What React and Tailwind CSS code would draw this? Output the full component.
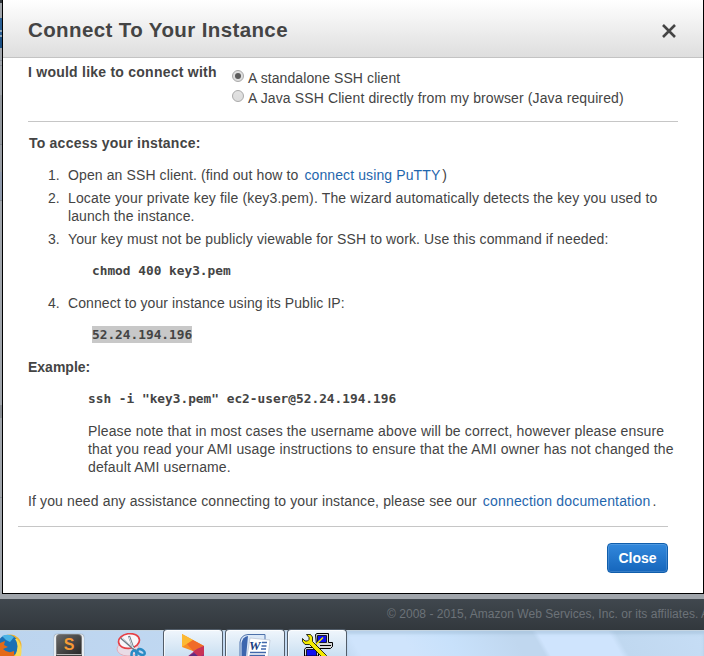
import React from "react";

const link = "text-[#1f66ad]";

function Radio({ checked }) {
  return (
    <span className="flex h-3 w-3 shrink-0 items-center justify-center rounded-full border border-[#a9a9a9] bg-linear-to-b from-[#e2e2e2] to-[#dcdcdc]">
      {checked && <span className="h-1.5 w-1.5 rounded-full bg-[#5c5c5c]" />}
    </span>
  );
}

function Line({ children, className = "" }) {
  return <div className={"h-[18px] whitespace-nowrap leading-[18px] " + className}>{children}</div>;
}

function Step({ n, children, className = "" }) {
  return (
    <li className={"flex " + className}>
      <span className="w-5 shrink-0 leading-[18px]">{n}.</span>
      <div>{children}</div>
    </li>
  );
}

function Firefox() {
  return (
    <svg className="h-[22px] w-[22px]" viewBox="0 0 22 22">
      <circle cx="10" cy="12" r="11.5" fill="#f2b32e" />
      <circle cx="8" cy="12" r="11" fill="#1c70b5" />
      <path d="M2 2 Q9 -1 14 3 L10 8 L6 6Z" fill="#4bb4e6" />
      <path d="M0 9 L5 7 L4 11 L8 13 L3 15 Q8 20 14 17 L14 22 L0 22Z" fill="#e46a18" />
      <path d="M15 5 Q20 11 15 22 L21 22 Q23 11 17 5Z" fill="#f8d958" />
    </svg>
  );
}

function Sublime() {
  return (
    <div className="h-[23px] w-[30px] rounded-t bg-[#e8edf1] px-0.5 shadow-[0_0_1px_#555]">
      <div className="flex h-[21px] items-center justify-center rounded-t-sm border border-[#777] border-b-[#bbb] bg-linear-to-br from-[#696969] to-[#292929] font-['Liberation_Sans'] text-[16px] font-bold leading-none text-[#f79a35]">
        S
      </div>
      <div className="h-[2px] bg-[#444]" />
    </div>
  );
}

function Scissors() {
  return (
    <svg className="h-[23px] w-[31px]" viewBox="0 0 31 23">
      <ellipse cx="12" cy="16" rx="11" ry="7" fill="#e9dbe6" stroke="#e4adb8" />
      <ellipse cx="13" cy="8" rx="10.500" ry="7.300" transform="rotate(-8 13 8)" fill="#f8f6fa" stroke="#e64046" strokeWidth="1.700" />
      <path d="M5 5 L20 18 M13 3 L18 17" stroke="#727d88" strokeWidth="2.200" />
      <path d="M6 5 L19 16 M13 4 L17 15" stroke="#dbe4e9" />
      <ellipse cx="18" cy="21.500" rx="2.500" ry="4" fill="none" stroke="#298bc5" strokeWidth="2.500" />
      <ellipse cx="25" cy="19" rx="4" ry="2.500" transform="rotate(30 25 19)" fill="none" stroke="#298bc5" strokeWidth="2.500" />
    </svg>
  );
}

function Ribbon() {
  return (
    <svg className="h-[23px] w-[22px]" viewBox="0 0 22 23">
      <path d="M0 0 L22 12 L11 17 L0 13Z" fill="#f88f24" />
      <path d="M0 0 L11 6 L0 13Z" fill="#fcb933" />
      <path d="M11 6 L22 12 L11 17 L5 10Z" fill="#f06b28" />
      <path d="M22 12 V23 H5 L15 15Z" fill="#a52c78" />
      <path d="M22 12 L11 17 L17 23 L22 20Z" fill="#c93256" />
      <path d="M5 23 L12 19 L17 23Z" fill="#5e2b80" />
    </svg>
  );
}

function Word() {
  return (
    <svg className="h-[23px] w-[32px]" viewBox="0 0 32 23">
      <path d="M1 23 V8 Q2 1 9 .5 H26 V23Z" fill="#dce9f8" stroke="#4d71aa" />
      <path d="M2.500 23 V9 Q3.500 3 9 2 L7 23Z" fill="#3d66ae" />
      <path d="M11 4 L31 6 L29 23 H8Z" fill="#fff" stroke="#b6c1d2" strokeWidth=".7" />
      <path d="M23 8.500 H28 M22.500 12 H27.500 M22 15 H27 M11 18.500 H27 M10.500 21.500 H26" stroke="#4267aa" strokeWidth="1.700" />
      <text x="10" y="16" fontFamily="Liberation Serif" fontSize="13" fontWeight="bold" fontStyle="italic" fill="#203f82">W</text>
    </svg>
  );
}

function Putty() {
  return (
    <svg className="h-[23px] w-[32px]" viewBox="0 0 32 23">
      <path d="M13.500 1.500 L15 .5 H26.500 V9.500 H30.500 V13.500 L28.500 15.500 H14.500 V11.500Z" fill="#d8d8d8" stroke="#000" />
      <path d="M15.500 2.500 H24.500 V9.500 H15.500Z" fill="#1010f0" stroke="#000" strokeWidth=".8" />
      <path d="M18 12.500 H29" stroke="#000" />
      <path d="M2.500 16.500 L4 14.500 H16.500 V23 H2.500Z" fill="#d8d8d8" stroke="#000" />
      <path d="M4.500 16.500 H14.500 V23 H4.500Z" fill="#1010f0" stroke="#000" strokeWidth=".8" />
      <path d="M21 4.500 L14 11.500" stroke="#f8ef00" strokeWidth="1.500" />
      <path d="M4.500 1.500 H8.500 L10.500 4 V8.500 L24.500 22.500 L24 23.500 H19.500 L7.500 11.500 H3 L.5 8.500 V5.500 L3 8 H5.500 L7 6.500 V4.500Z" fill="#f4ea00" stroke="#000" strokeWidth=".8" />
    </svg>
  );
}

function Task({ children, className = "" }) {
  return (
    <div className={"flex h-[27px] w-[60px] overflow-hidden rounded-t border border-b-0 border-[#525d69] bg-linear-to-b from-[#f0f6fc] to-[#cbe0f2] shadow-[inset_1px_1px_#ffffffb0] " + className}>
      {children}
    </div>
  );
}

export default function App() {
  return (
    <div className="flex h-[656px] w-[704px] flex-col overflow-hidden bg-[#a0a5ab] font-['Liberation_Sans',Arial,sans-serif] text-[14px] text-[#444]">
      <div className="flex h-[594px]">
        <div className="flex w-[2px] shrink-0 flex-col">
          <div className="h-[3px] bg-[#30363b]" />
          <div className="h-[15px]" />
          <div className="h-[12px] bg-[#2b6095]" />
          <div className="h-[7px] border-y-2 border-[#8fa5ba] bg-[#2b6095]" />
          <div className="h-[11px] bg-[#1c5084]" />
          <div className="h-[12px]" />
          <div className="h-[6px] border-y border-[#888e97]" />
          <div className="h-[29px]" />
          <div className="h-[50px] border-b border-[#80868e] bg-[#92979d]" />
          <div className="h-[27px] bg-[#989da4]" />
          <div className="h-[29px] border-b border-[#80868e] bg-[#8e99ab]" />
          <div className="h-[204px]" />
          <div className="h-[13px] bg-[#888d93]" />
          <div className="h-[80px] border-b border-[#888e97]" />
        </div>
        <div className="flex w-[702px] flex-col border-x border-b border-black bg-white">
          <header className="flex h-[58px] shrink-0 items-center justify-between border-b border-[#c3c3c3] bg-linear-to-b from-white to-[#dedede] pl-[25px] pr-[27.5px]">
            <h1 className="whitespace-nowrap pt-0.5 text-[20.5px] font-bold leading-6 tracking-[0.39px]">Connect To Your Instance</h1>
            <svg className="mt-1 h-[14px] w-[14px]" viewBox="0 0 14 14"><path d="M1 1 L13 13 M13 1 L1 13" stroke="#444" strokeWidth="2.600" /></svg>
          </header>
          <section className="ml-[25px] flex h-[64px] w-[650px] shrink-0 border-b border-[#c6c6c6]">
            <strong className="w-[204px] pt-[5px] leading-[18px] tracking-[0.24px]">I would like to connect with</strong>
            <div className="pt-[10px]">
              <div className="flex h-5 gap-1"><div className="pt-[2px]"><Radio checked /></div><Line className="mt-[1px] tracking-[0.09px]">A standalone SSH client</Line></div>
              <div className="flex h-5 gap-1"><div className="pt-[2px]"><Radio /></div><Line className="mt-[1px] tracking-[0.12px]">A Java SSH Client directly from my browser (Java required)</Line></div>
            </div>
          </section>
          <main className="h-[404px] shrink-0 pl-[25px] pt-3">
            <Line className="pl-px font-bold tracking-[0.22px]">To access your instance:</Line>
            <ol className="mt-[14px] pl-5">
              <Step n="1">
                <Line className="tracking-[0.11px]">Open an SSH client. (find out how to <span className={"ml-0.5 " + link}>connect using PuTTY</span><span className="ml-0.5">)</span></Line>
              </Step>
              <Step n="2" className="mt-[5px]">
                <Line className="tracking-[0.14px]">Locate your private key file (key3.pem). The wizard automatically detects the key you used to</Line>
                <Line className="tracking-[0.1px]">launch the instance.</Line>
              </Step>
              <Step n="3" className="mt-[5px]">
                <Line className="tracking-[0.115px]">Your key must not be publicly viewable for SSH to work. Use this command if needed:</Line>
                <Line className="mt-[14px] pl-6 font-['DejaVu_Sans_Mono',monospace] text-[12.8px] font-bold">chmod 400 key3.pem</Line>
              </Step>
              <Step n="4" className="mt-[14px]">
                <Line className="tracking-[0.08px]">Connect to your instance using its Public IP:</Line>
                <Line className="mt-[14px] pl-6 font-['DejaVu_Sans_Mono',monospace] text-[12.8px] font-bold"><span className="inline-block h-[17px] bg-[#c8c8c8] leading-[17px]">52.24.194.196</span></Line>
              </Step>
            </ol>
            <Line className="mt-[14px] font-bold">Example:</Line>
            <div className="pl-[60px]">
              <Line className="mt-[14px] font-['DejaVu_Sans_Mono',monospace] text-[12.8px] font-bold">ssh -i "key3.pem" ec2-user@52.24.194.196</Line>
              <Line className="mt-[14px] tracking-[0.137px]">Please note that in most cases the username above will be correct, however please ensure</Line>
              <Line className="tracking-[0.16px]">that you read your AMI usage instructions to ensure that the AMI owner has not changed the</Line>
              <Line className="tracking-[0.13px]">default AMI username.</Line>
            </div>
            <Line className="mt-4 tracking-[0.13px]">If you need any assistance connecting to your instance, please see our <span className={"ml-0.5 tracking-[0.17px] " + link}>connection documentation</span><span className="ml-0.5">.</span></Line>
          </main>
          <footer className="ml-[15px] flex w-[650px] justify-end border-t border-[#c6c6c6] pt-4">
            <button className="h-[30px] w-[61px] rounded border border-[#105eac] bg-linear-to-b from-[#3288dc] to-[#1566bc] font-bold leading-[28px] text-white shadow-[inset_0_0_0_1px_#ffffff25]">Close</button>
          </footer>
        </div>
      </div>
      <div className="mt-[5px] h-[31px] overflow-hidden whitespace-nowrap bg-linear-to-b from-[#40474e] to-[#32383d] pl-[387px] text-[12px] leading-[30px] tracking-[0.035px] text-[#6c7278]">© 2008 - 2015, Amazon Web Services, Inc. or its affiliates. All rights reserved.</div>
      <div className="flex h-[26px] shrink-0 border-t border-[#c5d5e2] bg-linear-to-r from-[#bcd4ee] to-[#cbe2fa]">
        <div className="w-[57px] pt-[3px]"><Firefox /></div>
        <div className="-ml-[3px] w-[62px] pt-[3px]"><Sublime /></div>
        <div className="w-[47px] pt-[2px]"><Scissors /></div>
        <div className="-mt-[2px] flex gap-[2px]">
          <Task className="pl-[18px] pt-[4px]"><Ribbon /></Task>
          <Task className="pl-[13px] pt-[4px]"><Word /></Task>
          <Task className="pl-[14px] pt-[3px]"><Putty /></Task>
        </div>
        <div className="h-full flex-1 bg-[linear-gradient(60deg,#c3daf2_0%,#cfe4fc_4%_18%,#c8e1fb_30%,#c0d7ef_48%_53.5%,#cfe4fd_55%_74%,#c0d8f0_76%,#c6ddf5_100%)] shadow-[inset_0_3px_3px_#8baac555]" />
      </div>
    </div>
  );
}
